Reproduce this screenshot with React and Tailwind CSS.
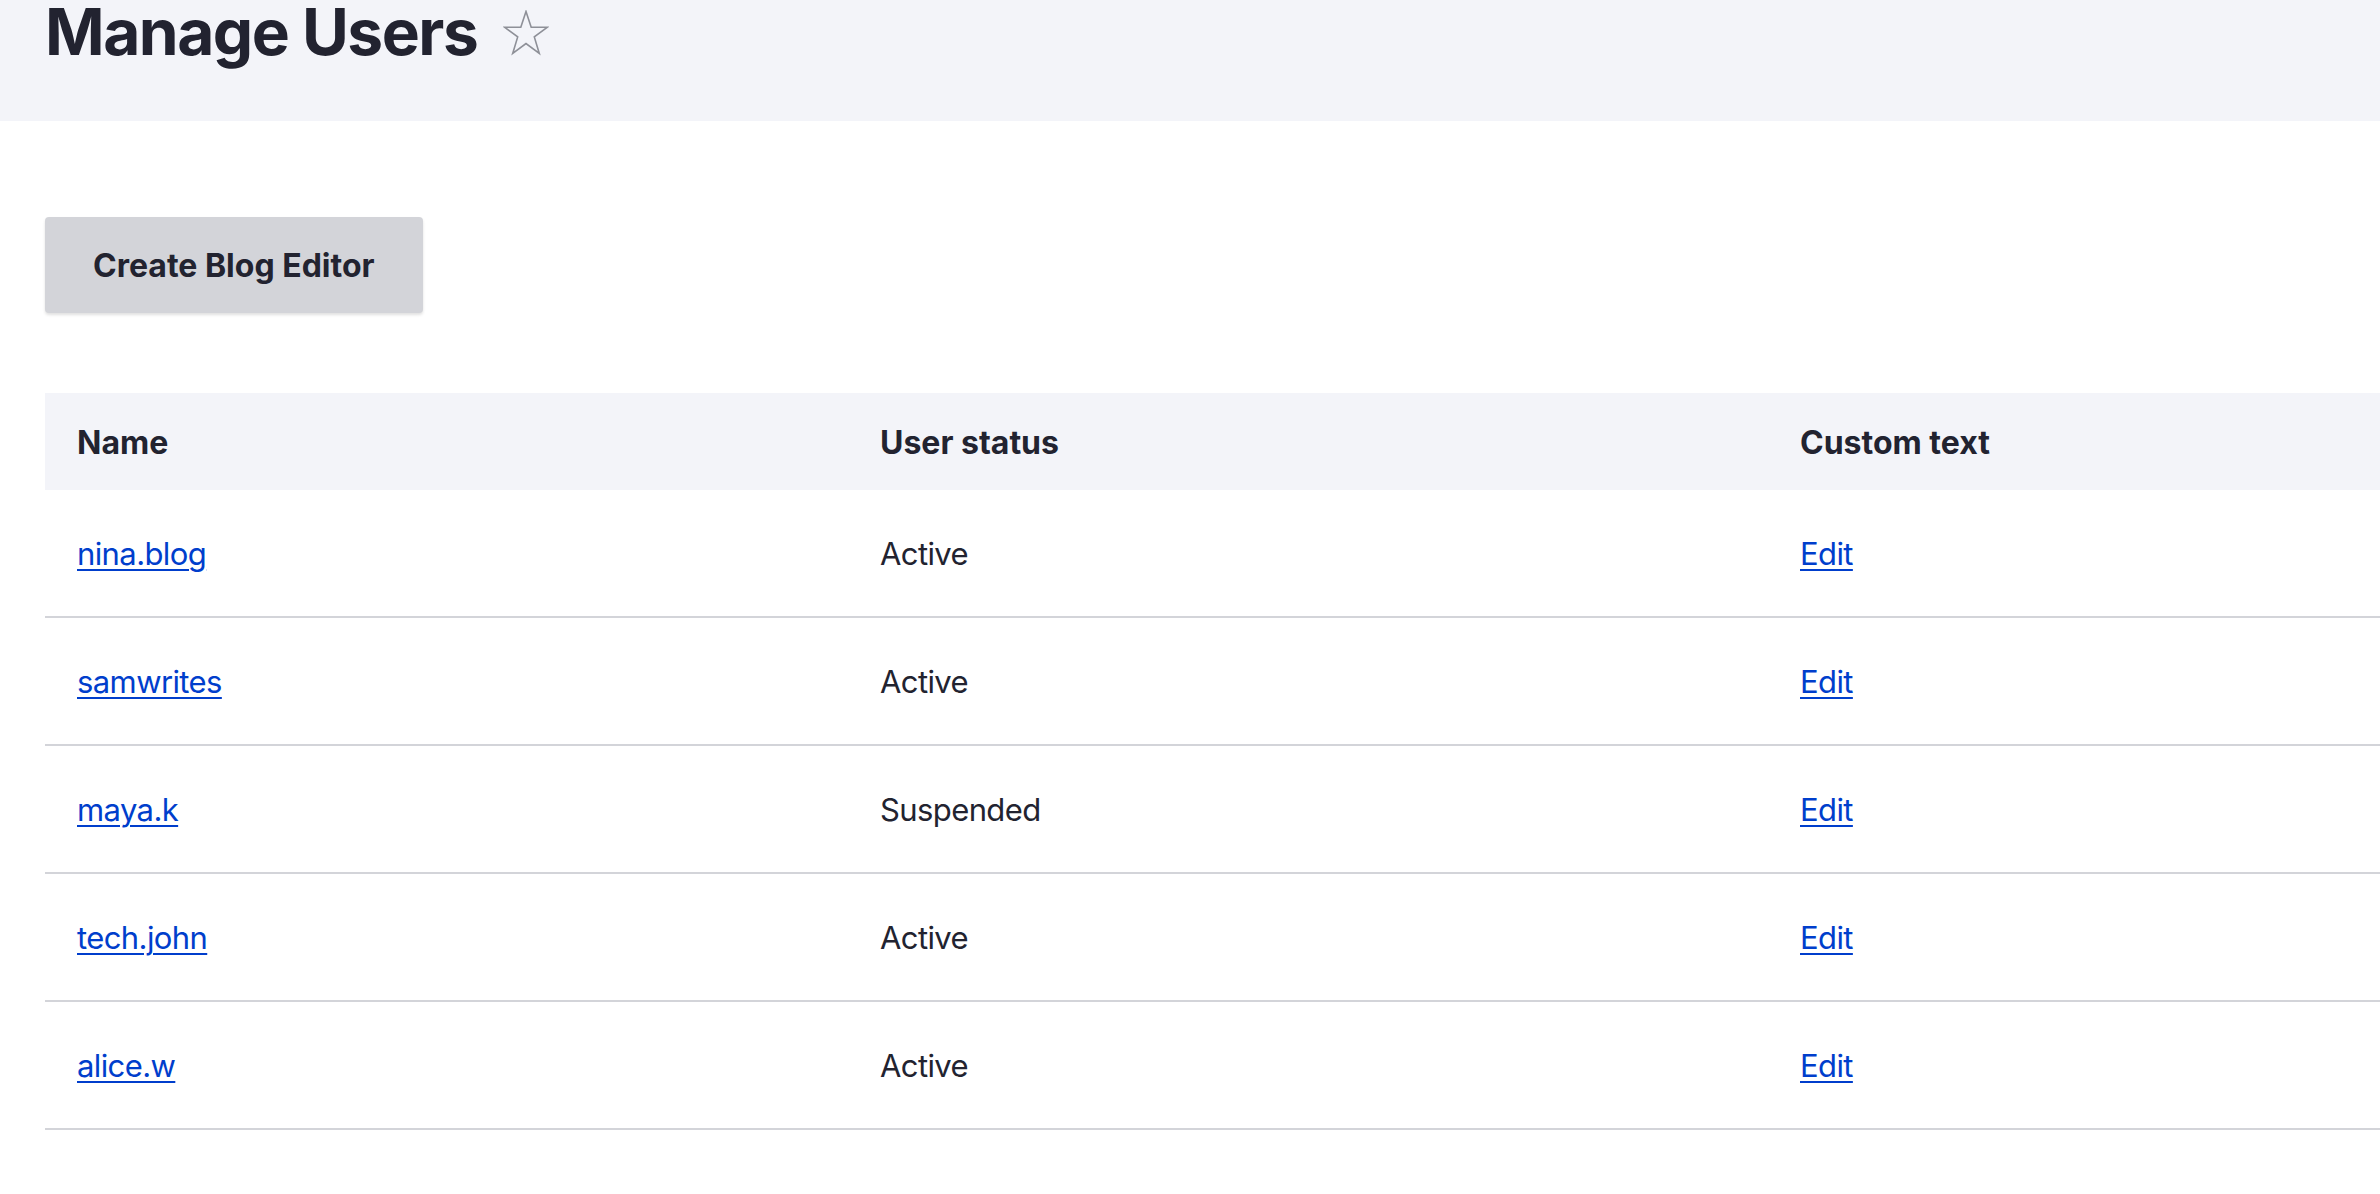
import React from "react";

const rows = [
  { name: "nina.blog", status: "Active" },
  { name: "samwrites", status: "Active" },
  { name: "maya.k", status: "Suspended" },
  { name: "tech.john", status: "Active" },
  { name: "alice.w", status: "Active" },
];

export default function App() {
  return (
    <div
      className="min-h-[1194px] bg-white text-[#222330]"
      style={{ fontFamily: "Inter, 'Noto Sans', sans-serif" }}
    >
      <header className="bg-[#f3f4f9] pl-[45px] pb-[57px]">
        <div className="flex items-start">
          <h1 className="text-[64px] font-bold leading-none tracking-[-1.5px]">Manage Users</h1>
          <svg
            className="ml-[26px] mt-[10px] h-[46px] w-[46px]"
            viewBox="0 0 46 46"
            fill="none"
            stroke="#8e9098"
            strokeWidth="1.6"
            strokeLinejoin="miter"
          >
            <polygon points="23,1.5 28.2,17.2 44.5,17.2 31.3,26.9 36.3,43.5 23,33.6 9.7,43.5 14.7,26.9 1.5,17.2 17.8,17.2" />
          </svg>
        </div>
      </header>

      <main className="pl-[45px] pt-[96px]">
        <button className="h-[96px] rounded-[4px] bg-[#d3d4d9] px-[48px] pt-[2px] text-[32px] font-bold leading-none text-[#222330] shadow-[0_2px_3px_rgba(0,0,0,0.12)]">
          Create Blog Editor
        </button>

        <div className="mt-[80px] w-full">
          <div className="grid h-[97px] grid-cols-[803px_920px_1fr] items-center bg-[#f3f4f9] pt-[2px] text-[32px] font-bold leading-none">
            <div className="px-[32px]">Name</div>
            <div className="px-[32px]">User status</div>
            <div className="px-[32px]">Custom text</div>
          </div>
          {rows.map((r) => (
            <div
              key={r.name}
              className="grid h-[128px] grid-cols-[803px_920px_1fr] items-center border-b-2 border-[#d3d4d9] pt-[1px] text-[31px] leading-none tracking-[-0.6px]"
            >
              <div className="px-[32px]">
                <a href="#" className="text-[#003ecc] underline decoration-2 underline-offset-[4px]">
                  {r.name}
                </a>
              </div>
              <div className="px-[32px]">{r.status}</div>
              <div className="px-[32px]">
                <a href="#" className="text-[#003ecc] underline decoration-2 underline-offset-[4px]">
                  Edit
                </a>
              </div>
            </div>
          ))}
        </div>
      </main>
    </div>
  );
}
